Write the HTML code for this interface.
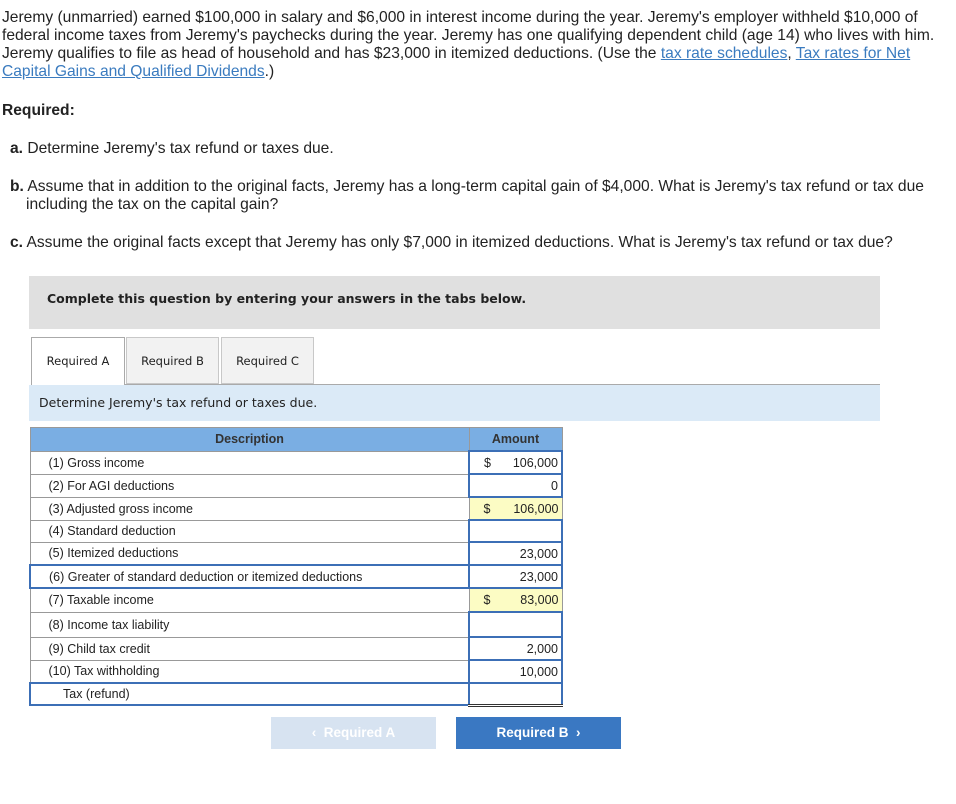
<!DOCTYPE html>
<html><head><style>
body{margin:0;background:#fff;font-family:"Liberation Sans",sans-serif;color:#222;width:956px;height:804px;position:relative;overflow:hidden}
.p{position:absolute;left:2px;top:9px;width:954px;font-size:15.6px;line-height:18px;margin:0;white-space:nowrap}
a{color:#3a7bbf;text-decoration:underline}
.abs{position:absolute;font-size:15.6px;line-height:18px;white-space:nowrap}
.grey{position:absolute;left:29px;top:276px;width:851px;height:53px;background:#e0e0e0}
.grey b{position:absolute;left:18px;top:15px;font-family:"DejaVu Sans",sans-serif;font-size:12.5px}
.tab{position:absolute;top:337px;height:47px;box-sizing:border-box;border:1px solid #c8c8c8;background:#f2f2f2;font-family:"DejaVu Sans",sans-serif;font-size:11.5px;text-align:center;line-height:46px}
.tab.on{background:#fff;border-color:#aaa;border-bottom:none;height:48px}
.line{position:absolute;left:124px;top:384px;width:756px;height:1px;background:#aaa}
.bar{position:absolute;left:29px;top:385px;width:851px;height:36px;background:#dbeaf7;font-family:"DejaVu Sans",sans-serif;font-size:12.5px;line-height:36px;text-indent:10px}
table{position:absolute;left:29px;top:427px;border-collapse:collapse;font-size:12.5px}
td{border:1px solid #999;padding:0;height:22px}
th{background:#7aaee3;border:1px solid #999;height:22px;padding:0;font-size:12.5px;color:#333}
td.d{width:439px;padding-left:18px;box-sizing:border-box}
td.a{width:93px;text-align:right;padding-right:3px;box-sizing:border-box;border:1px solid #999}
td.in{border:2px solid #3c6fb6}
td.y{background:#fcfcc4}
.s{float:left;padding-left:14px}
.btn{position:absolute;top:717px;height:32px;width:165px;font-size:13.5px;font-weight:bold;text-align:center;line-height:32px;color:#fff}
</style></head><body>
<p class="p">Jeremy (unmarried) earned $100,000 in salary and $6,000 in interest income during the year. Jeremy's employer withheld $10,000 of<br>federal income taxes from Jeremy's paychecks during the year. Jeremy has one qualifying dependent child (age 14) who lives with him.<br>Jeremy qualifies to file as head of household and has $23,000 in itemized deductions. (Use the <a>tax rate schedules</a>, <a>Tax rates for Net<br>Capital Gains and Qualified Dividends</a>.)</p>
<div class="abs" style="left:2px;top:102px;font-weight:bold">Required:</div>
<div class="abs" style="left:10px;top:140px"><b>a.</b> Determine Jeremy's tax refund or taxes due.</div>
<div class="abs" style="left:10px;top:178px"><b>b.</b> Assume that in addition to the original facts, Jeremy has a long-term capital gain of $4,000. What is Jeremy's tax refund or tax due<br><span style="padding-left:16px">including the tax on the capital gain?</span></div>
<div class="abs" style="left:10px;top:234px"><b>c.</b> Assume the original facts except that Jeremy has only $7,000 in itemized deductions. What is Jeremy's tax refund or tax due?</div>
<div class="grey"><b>Complete this question by entering your answers in the tabs below.</b></div>
<div class="tab on" style="left:31px;width:94px">Required A</div>
<div class="tab" style="left:126px;width:93px">Required B</div>
<div class="tab" style="left:221px;width:93px">Required C</div>
<div class="line"></div>
<div class="bar">Determine Jeremy's tax refund or taxes due.</div>
<table>
<tr><th>Description</th><th>Amount</th></tr>
<tr><td class="d" style="height:23px">(1) Gross income</td><td class="a in"><span class="s">$</span>106,000</td></tr>
<tr><td class="d" style="height:23px">(2) For AGI deductions</td><td class="a in">0</td></tr>
<tr><td class="d" style="height:23px">(3) Adjusted gross income</td><td class="a y"><span class="s">$</span>106,000</td></tr>
<tr><td class="d">(4) Standard deduction</td><td class="a in"></td></tr>
<tr><td class="d" style="height:23px">(5) Itemized deductions</td><td class="a in">23,000</td></tr>
<tr><td class="d in" style="height:23px">(6) Greater of standard deduction or itemized deductions</td><td class="a in">23,000</td></tr>
<tr><td class="d" style="height:24px">(7) Taxable income</td><td class="a y"><span class="s">$</span>83,000</td></tr>
<tr><td class="d" style="height:25px">(8) Income tax liability</td><td class="a in"></td></tr>
<tr><td class="d" style="height:23px">(9) Child tax credit</td><td class="a in">2,000</td></tr>
<tr><td class="d" style="height:23px">(10) Tax withholding</td><td class="a in">10,000</td></tr>
<tr><td class="d in" style="padding-left:32px">Tax (refund)</td><td class="a in" style="border-bottom:3px double #333"></td></tr>
</table>
<div class="btn" style="left:271px;background:#d7e3f1;color:#fff">&lsaquo;&nbsp; Required A</div>
<div class="btn" style="left:456px;background:#3a78c2">Required B &nbsp;&rsaquo;</div>
</body></html>
